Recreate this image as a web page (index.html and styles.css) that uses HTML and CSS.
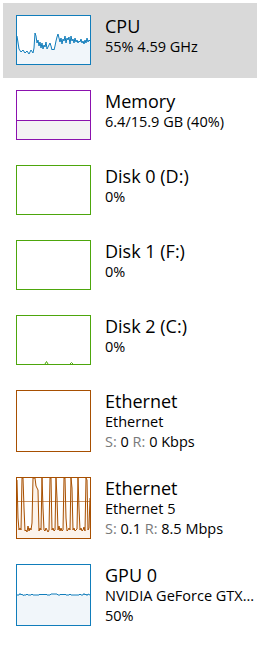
FILE: index.html
```html
<!DOCTYPE html>
<html>
<head>
<meta charset="utf-8">
<link rel="stylesheet" href="styles.css">
</head>
<body>
<div class="list">
  <div class="item selected">
    <div class="chart cpu">
      <svg width="73" height="48" viewBox="0 0 73 48">
        <polygon class="fill" points="0,20 2,33 4,36 6,34 8,37 10,35 12,38 14,34 16,37 17,32 18,17 19,20 20,27 21,24 22,30 23,26 24,32 25,27 26,33 27,29 28,31 29,26 30,33 31,31 32,29 33,27 34,30 35,34 36,33 37,34 38,30 39,25 40,21 41,18 42,22 43,26 44,22 45,28 46,23 47,25 48,20 49,27 50,22 51,24 52,21 53,28 54,20 55,25 56,23 57,27 58,22 59,26 60,24 61,27 62,25 63,26 64,23 65,27 66,25 67,28 68,24 69,27 70,22 71,26 72,24 73,25 73,48 0,48"/>
        <polyline class="line" points="0,20 2,33 4,36 6,34 8,37 10,35 12,38 14,34 16,37 17,32 18,17 19,20 20,27 21,24 22,30 23,26 24,32 25,27 26,33 27,29 28,31 29,26 30,33 31,31 32,29 33,27 34,30 35,34 36,33 37,34 38,30 39,25 40,21 41,18 42,22 43,26 44,22 45,28 46,23 47,25 48,20 49,27 50,22 51,24 52,21 53,28 54,20 55,25 56,23 57,27 58,22 59,26 60,24 61,27 62,25 63,26 64,23 65,27 66,25 67,28 68,24 69,27 70,22 71,26 72,24 73,25"/>
      </svg>
    </div>
    <div class="info">
      <div class="title">CPU</div>
      <div class="sub">55% 4.59 GHz</div>
    </div>
  </div>

  <div class="item">
    <div class="chart mem">
      <svg width="73" height="48" viewBox="0 0 73 48">
        <rect class="fill" x="0" y="29" width="73" height="19"/>
        <line class="line" x1="0" y1="29.5" x2="73" y2="29.5"/>
      </svg>
    </div>
    <div class="info">
      <div class="title">Memory</div>
      <div class="sub">6.4/15.9 GB (40%)</div>
    </div>
  </div>

  <div class="item">
    <div class="chart disk">
      <svg width="73" height="48" viewBox="0 0 73 48"></svg>
    </div>
    <div class="info">
      <div class="title">Disk 0 (D:)</div>
      <div class="sub">0%</div>
    </div>
  </div>

  <div class="item">
    <div class="chart disk">
      <svg width="73" height="48" viewBox="0 0 73 48"></svg>
    </div>
    <div class="info">
      <div class="title">Disk 1 (F:)</div>
      <div class="sub">0%</div>
    </div>
  </div>

  <div class="item">
    <div class="chart disk">
      <svg width="73" height="48" viewBox="0 0 73 48">
        <polyline class="line" points="28,48 29.5,45.5 31,48"/>
        <polyline class="line" points="53,48 54.5,46.5 56,48"/>
      </svg>
    </div>
    <div class="info">
      <div class="title">Disk 2 (C:)</div>
      <div class="sub">0%</div>
    </div>
  </div>

  <div class="item tall">
    <div class="chart eth">
      <svg width="73" height="60" viewBox="0 0 73 60"></svg>
    </div>
    <div class="info">
      <div class="title">Ethernet</div>
      <div class="sub">Ethernet</div>
      <div class="sub"><span class="lbl">S:</span> 0 <span class="lbl">R:</span> 0 Kbps</div>
    </div>
  </div>

  <div class="item tall">
    <div class="chart eth">
      <svg width="73" height="60" viewBox="0 0 73 60">
        <polygon class="fill" points="0,2 1,40 2,52 3,50 4,52 5,0 6,0 7,30 8,53 9,52 10,54 11,48 12,53 13,50 14,52 15,45 16,0 18,0 19,8 20,10 21,12 22,53 23,50 24,52 25,0 26,30 27,52 28,53 29,50 30,52 31,54 32,52 33,0 34,0 35,52 36,50 37,53 38,52 39,0 40,20 41,52 42,48 43,53 44,50 45,53 46,52 47,0 48,0 49,40 50,53 51,52 52,50 53,52 54,0 55,10 56,52 57,50 58,53 59,52 60,51 61,0 62,30 63,52 64,50 65,53 66,52 67,49 68,53 69,0 70,2 71,52 72,50 73,20 73,60 0,60"/>
        <line class="scale" x1="0" y1="23.5" x2="73" y2="23.5"/>
        <polyline class="line" points="0,2 1,40 2,52 3,50 4,52 5,0 6,0 7,30 8,53 9,52 10,54 11,48 12,53 13,50 14,52 15,45 16,0 18,0 19,8 20,10 21,12 22,53 23,50 24,52 25,0 26,30 27,52 28,53 29,50 30,52 31,54 32,52 33,0 34,0 35,52 36,50 37,53 38,52 39,0 40,20 41,52 42,48 43,53 44,50 45,53 46,52 47,0 48,0 49,40 50,53 51,52 52,50 53,52 54,0 55,10 56,52 57,50 58,53 59,52 60,51 61,0 62,30 63,52 64,50 65,53 66,52 67,49 68,53 69,0 70,2 71,52 72,50 73,20"/>
      </svg>
    </div>
    <div class="info">
      <div class="title">Ethernet</div>
      <div class="sub">Ethernet 5</div>
      <div class="sub"><span class="lbl">S:</span> 0.1 <span class="lbl">R:</span> 8.5 Mbps</div>
    </div>
  </div>

  <div class="item tall">
    <div class="chart gpu">
      <svg width="73" height="60" viewBox="0 0 73 60">
        <polygon class="fill" points="0,30 2,30 3,28.5 4,30 5,29 6,30.5 7,30 9,30 10,29 11,30 14,30 15,29 16,30 22,30 23,29 24,30 25,29 26,30 27,29 28,30 29,29 30,30 33,30 34,29 40,29 41,30 43,30 44,29 45,30 46,29 47,30 48,29 49,30 52,30 53,29 54,30 62,30 63,29 64,30 66,30 67,28.5 68,30 69,29 70,30.5 71,29 73,30 73,60 0,60"/>
        <polyline class="line" points="0,30 2,30 3,28.5 4,30 5,29 6,30.5 7,30 9,30 10,29 11,30 14,30 15,29 16,30 22,30 23,29 24,30 25,29 26,30 27,29 28,30 29,29 30,30 33,30 34,29 40,29 41,30 43,30 44,29 45,30 46,29 47,30 48,29 49,30 52,30 53,29 54,30 62,30 63,29 64,30 66,30 67,28.5 68,30 69,29 70,30.5 71,29 73,30"/>
      </svg>
    </div>
    <div class="info">
      <div class="title">GPU 0</div>
      <div class="sub">NVIDIA GeForce GTX...</div>
      <div class="sub">50%</div>
    </div>
  </div>
</div>
</body>
</html>
```

FILE: styles.css
```css
html, body {
  margin: 0;
  padding: 0;
  background: #ffffff;
}

body {
  font-family: "Segoe UI", "Open Sans", "Noto Sans", sans-serif;
  color: #000000;
  width: 260px;
  height: 657px;
  overflow: hidden;
}

.list {
  display: flex;
  flex-direction: column;
  padding: 3px;
}

.item {
  display: flex;
  align-items: flex-start;
  gap: 14px;
  padding: 12px 4px 13px 13px;
  height: 50px;
}

.item.tall {
  height: 62px;
}

.item.selected {
  background: #d9d9d9;
}

.chart {
  flex: none;
  width: 73px;
  height: 48px;
  border: 1px solid;
  background: #ffffff;
}

.item.tall .chart {
  height: 60px;
}

.chart svg {
  display: block;
}

.chart .line {
  fill: none;
  stroke-width: 1;
}

.cpu, .gpu { border-color: #117dbb; }
.cpu .line, .gpu .line { stroke: #117dbb; }
.cpu .fill, .gpu .fill { fill: #f1f6fa; }

.mem { border-color: #8b12ae; }
.mem .line { stroke: #8b12ae; }
.mem .fill { fill: #f4f2f4; }

.disk { border-color: #4da60c; }
.disk .line { stroke: #4da60c; }

.eth { border-color: #a74f01; }
.eth .line { stroke: #a74f01; }
.eth .fill { fill: #fcf3eb; }
.eth .scale { stroke: #c9966a; stroke-width: 1; }

.info {
  min-width: 0;
  display: flex;
  flex-direction: column;
}

.title {
  font-size: 18px;
  line-height: 22px;
  white-space: nowrap;
}

.sub {
  font-size: 14.5px;
  line-height: 20px;
  white-space: nowrap;
}

.lbl {
  color: #7a7a7a;
}
```
